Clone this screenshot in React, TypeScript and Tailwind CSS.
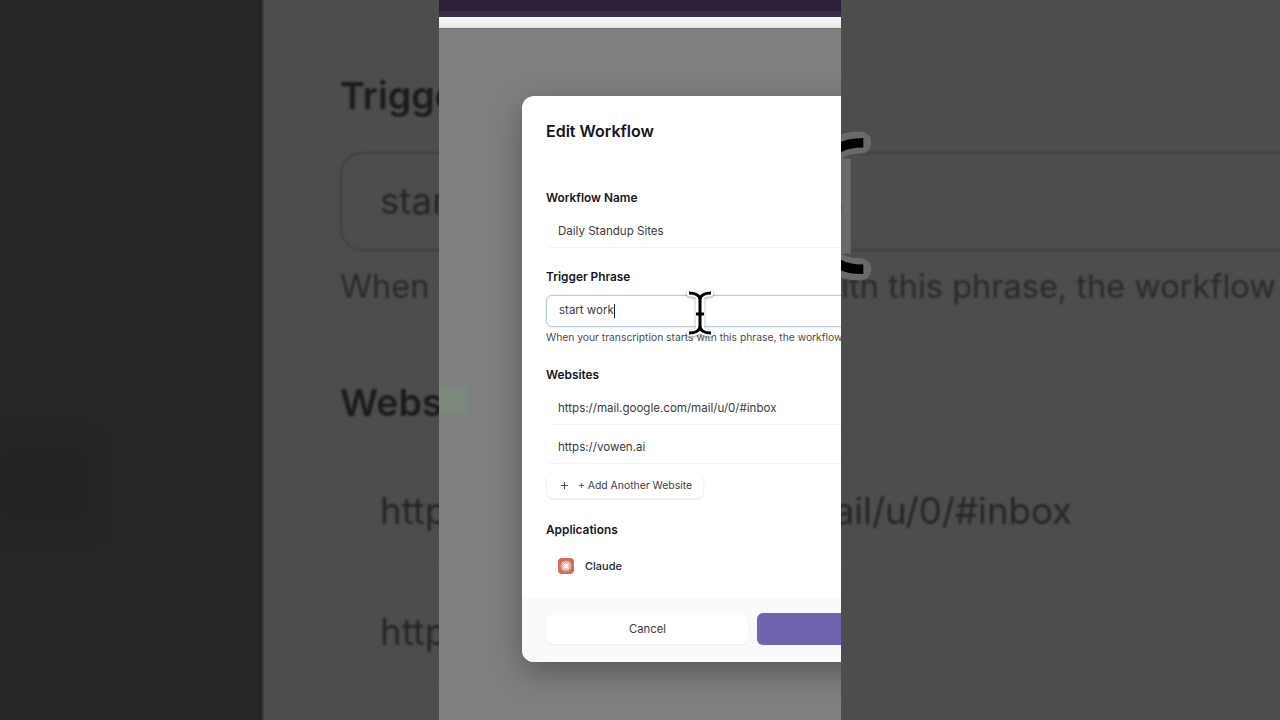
import { Plus } from "lucide-react";

const IBeam = ({ className, halo, stemHalo }: { className: string; halo: string; stemHalo: number }) => (
  <svg viewBox="0 0 28 48" fill="none" className={className}>
    <path d="M14 9v30" stroke={halo} strokeWidth={stemHalo} />
    <path
      d="M4 4c6 0 10 2.500 10 7v26c0 4.500-4 7-10 7M24 4c-6 0-10 2.500-10 7v26c0 4.500 4 7 10 7"
      stroke={halo}
      strokeWidth="7"
      strokeLinecap="round"
    />
    <g stroke="#000" strokeWidth="3">
      <path d="M3 4c6.500 0 11 2.500 11 7v26c0 4.500-4.500 7-11 7M25 4c-6.500 0-11 2.500-11 7v26c0 4.500 4.500 7 11 7" />
      <path d="M10 25h8" />
    </g>
  </svg>
);

const ClaudeIcon = () => (
  <div className="w-4 h-4 rounded-[4px] bg-[#d0705a] flex items-center justify-center">
    <svg viewBox="0 0 16 16" className="w-4 h-4" stroke="#fff" strokeWidth="0.900" strokeLinecap="round">
      <path d="M8 3v10M3 8h10M4.500 4.500l7 7M11.500 4.500l-7 7M5.800 3.500l4.400 9M10.200 3.500l-4.400 9M3.500 5.800l9 4.400M3.500 10.200l9-4.400" />
      <circle cx="8" cy="8" r="1.500" fill="#fff" stroke="none" />
    </svg>
  </div>
);

const Backdrop = () => (
  <div className="absolute inset-0 flex">
    <div className="w-[264px] shrink-0 bg-[#262626] border-r-2 border-[#3e3e3e] relative overflow-hidden">
      <div className="absolute left-0 top-[445px] w-[90px] h-[80px] bg-[#212321] blur-[10px]" />
    </div>
    <div className="flex-1 bg-[#4d4d4d] overflow-hidden">
      <div className="pl-[76px] text-[#1b1b1d] blur-[1px] whitespace-nowrap">
        <div className="mt-[70px] h-[52px] leading-[52px] text-[37.500px] font-semibold">Trigger Phrase</div>
        <div className="mt-[30px] -mr-[40px] h-[99px] rounded-l-[22px] border-2 border-[#3a4048] border-r-0 pl-[38px] flex items-center text-[36.500px] text-[#252527]">
          start work
        </div>
        <div className="mt-[11px] h-[50px] leading-[50px] text-[32.500px] text-[#29292a]">
          When your transcription starts with this phrase, the workflow
        </div>
        <div className="mt-[65px] h-[52px] leading-[52px] text-[37.500px] font-semibold">Websites</div>
        <div className="mt-[57px] pl-[40px] h-[76px] border-b border-[#535353] text-[36.600px] leading-[50px] text-[#252527]">
          https://mail.google.com/mail/u/0/#inbox
        </div>
        <div className="mt-[45px] pl-[40px] h-[76px] border-b border-[#535353] text-[36.600px] leading-[50px] text-[#252527]">
          https://vowen.ai
        </div>
      </div>
    </div>
    <IBeam halo="#6a6a6a" stemHalo={14} className="absolute left-[784px] top-[130px] w-[89px] h-[152px] blur-[0.6px]" />
  </div>
);

const Label = ({ children, className }: { children: string; className: string }) => (
  <div className={`text-[11.850px] leading-4 font-semibold text-[#16161a] ${className}`}>{children}</div>
);

const Field = ({ children, className }: { children: string; className: string }) => (
  <div className={`h-[31px] pl-3 flex items-center text-[11.550px] text-[#3a3a3e] border-b border-[#f4f4f2] rounded-md ${className}`}>
    {children}
  </div>
);

const Modal = () => (
  <div className="ml-[83px] mt-[67px] w-[600px] h-[566px] shrink-0 bg-white rounded-tl-xl rounded-bl-xl shadow-[0_10px_30px_rgba(0,0,0,0.3)] flex flex-col overflow-hidden">
    <div className="flex-1 pl-6">
      <div className="mt-[25px] h-5 leading-5 text-[16px] font-semibold text-[#141416]">Edit Workflow</div>
      <Label className="mt-[49px]">Workflow Name</Label>
      <Field className="mt-[11px]">Daily Standup Sites</Field>
      <Label className="mt-[21px]">Trigger Phrase</Label>
      <div className="mt-[10px] h-[32px] pl-3 flex items-center text-[11.500px] text-[#3a3a3e] border border-[#b9c9e2] rounded-md shadow-[0_0_0_1px_rgba(190,205,230,0.25)]">
        start work<span className="w-px h-[14px] bg-[#222]" />
      </div>
      <div className="mt-[3px] h-[14px] leading-[14px] text-[10.300px] text-[#4b4b50] whitespace-nowrap">
        When your transcription starts with this phrase, the workflow
      </div>
      <Label className="mt-[23px]">Websites</Label>
      <Field className="mt-[11px]">https://mail.google.com/mail/u/0/#inbox</Field>
      <Field className="mt-[8px]">https://vowen.ai</Field>
      <div className="mt-[9px] ml-px w-[156px] h-[25px] pl-[12px] flex items-center gap-[8px] rounded-md bg-white shadow-[0_1px_3px_rgba(0,0,0,0.12)] text-[10.400px] text-[#3d3d42]">
        <Plus size={11} strokeWidth={2} />
        <span>+ Add Another Website</span>
      </div>
      <Label className="mt-[24px]">Applications</Label>
      <div className="mt-[20px] ml-3 flex items-center gap-[11px] text-[11px] font-medium text-[#26262a]">
        <ClaudeIcon />
        <span>Claude</span>
      </div>
    </div>
    <div className="h-[64px] shrink-0 bg-[#f9fafb] pl-[25px] flex items-center gap-[9px]">
      <div className="w-[201px] h-[29px] mb-[2px] rounded-md bg-white shadow-[0_1px_2px_rgba(0,0,0,0.06)] flex items-center justify-center pt-px text-[11.300px] text-[#3a3a3e]">
        Cancel
      </div>
      <div className="w-[201px] h-[32px] mb-[2px] rounded-md bg-[#6f64ad]" />
    </div>
  </div>
);

export default function App() {
  return (
    <div className="relative w-[1280px] h-[720px] overflow-hidden font-['Inter',sans-serif]">
      <Backdrop />
      <div className="absolute left-[439px] top-0 w-[402px] h-[720px] overflow-hidden flex flex-col">
        <div className="h-[11px] bg-[#2e1f38]" />
        <div className="h-[6px] bg-[#3a2d47]" />
        <div className="h-[12px] bg-gradient-to-b from-[#fbfafc] to-[#e6e6e6] border-b border-[#6e6e6e]" />
        <div className="flex-1 bg-[#7f7f7f] flex flex-col relative">
          <div className="absolute left-0 top-[358px] w-[28px] h-[26px] bg-[#7c8b7e] blur-[2px]" />
          <Modal />
        </div>
      </div>
      <IBeam halo="#fff" stemHalo={9} className="absolute left-[686px] top-[289px] w-[28px] h-[48px] drop-shadow-[0_1px_1px_rgba(0,0,0,0.4)]" />
    </div>
  );
}
